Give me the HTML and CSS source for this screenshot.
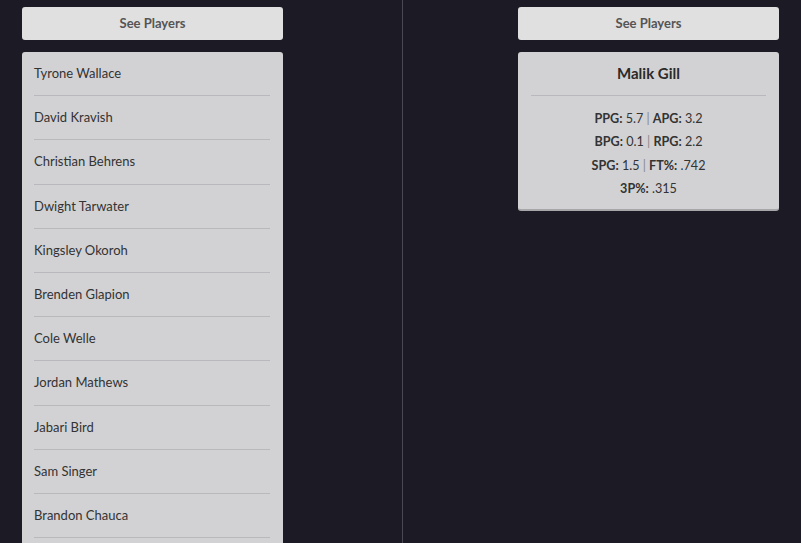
FILE: index.html
```html
<!DOCTYPE html>
<html>
<head>
<meta charset="utf-8">
<link rel="stylesheet" href="styles.css">
</head>
<body>
<div class="page">
  <div class="col col-left">
    <button class="btn">See Players</button>
    <ul class="card list">
      <li>Tyrone Wallace</li>
      <li>David Kravish</li>
      <li>Christian Behrens</li>
      <li>Dwight Tarwater</li>
      <li>Kingsley Okoroh</li>
      <li>Brenden Glapion</li>
      <li>Cole Welle</li>
      <li>Jordan Mathews</li>
      <li>Jabari Bird</li>
      <li>Sam Singer</li>
      <li>Brandon Chauca</li>
    </ul>
  </div>
  <div class="col col-right">
    <button class="btn">See Players</button>
    <div class="card detail">
      <div class="name">Malik Gill</div>
      <div class="stats">
        <p><b>PPG:</b> 5.7 <span class="sep">|</span> <b>APG:</b> 3.2</p>
        <p><b>BPG:</b> 0.1 <span class="sep">|</span> <b>RPG:</b> 2.2</p>
        <p><b>SPG:</b> 1.5 <span class="sep">|</span> <b>FT%:</b> .742</p>
        <p><b>3P%:</b> .315</p>
      </div>
    </div>
  </div>
</div>
</body>
</html>
```
FILE: styles.css
```css
html, body {
  margin: 0;
  padding: 0;
  height: 100%;
  overflow: hidden;
  background: #1c1a25;
  font-family: Lato, "Open Sans", sans-serif;
}
.page {
  display: flex;
  height: 100%;
}
.col {
  display: flex;
  flex-direction: column;
  padding-top: 7px;
  box-sizing: border-box;
}
.col-left {
  width: 403px;
  padding-left: 22px;
  border-right: 1px solid #4a4853;
  align-items: flex-start;
}
.col-right {
  flex: 1;
  padding-right: 22px;
  align-items: flex-end;
}
.btn {
  flex-shrink: 0;
  width: 261px;
  height: 33px;
  border: none;
  border-radius: 3px;
  background: #e0e0e0;
  color: #555;
  font-family: Lato, sans-serif;
  font-weight: bold;
  font-size: 13px;
  padding: 0 0 2px;
  margin: 0;
}
.card {
  flex-shrink: 0;
  width: 261px;
  margin: 12px 0 0;
  background: #d2d2d4;
  border-radius: 3px;
  box-sizing: border-box;
}
.list {
  list-style: none;
  padding: 0 13px 20px 12px;
}
.list li {
  padding: 11px 0 12px;
  line-height: 20.2px;
  font-size: 13px;
  color: #333;
  border-bottom: 1px solid #b9b9bd;
}
.detail {
  padding: 0 13px 8px;
  border-bottom: 2px solid #a7a7aa;
  text-align: center;
  color: #333;
}
.name {
  font-weight: bold;
  font-size: 15px;
  line-height: 20px;
  padding: 11px 0 12px;
  border-bottom: 1px solid #b9b9bd;
  color: #2a2a2a;
}
.stats {
  padding-top: 11px;
}
.stats p {
  margin: 0;
  font-size: 12.6px;
  line-height: 23.4px;
}
.stats b {
  color: #333;
}
.sep {
  color: #888;
}
```
